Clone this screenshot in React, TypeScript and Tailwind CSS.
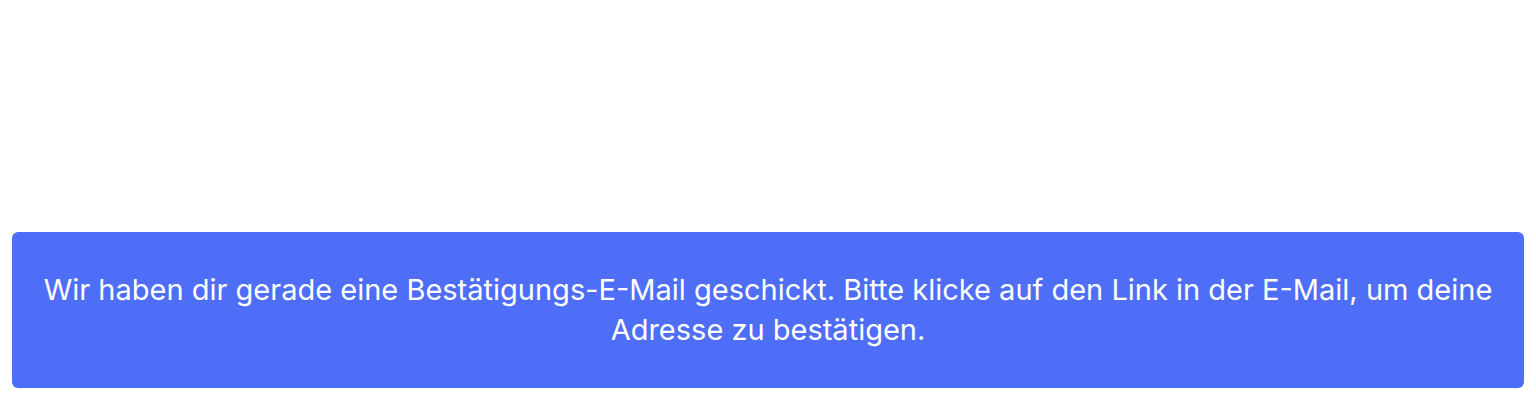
import React from 'react';

const App: React.FC = () => {
  return (
    <div className="h-screen bg-white flex flex-col justify-end p-3 font-['Inter',sans-serif]">
      {/* Notice */}
      <div className="rounded-md bg-[#4f6ef7] px-6 py-[38px] text-center text-white text-[29px] leading-[40px]">
        Wir haben dir gerade eine Bestätigungs-E-Mail geschickt. Bitte klicke auf den Link in der E-Mail, um deine Adresse zu bestätigen.
      </div>
    </div>
  );
};

export default App;
